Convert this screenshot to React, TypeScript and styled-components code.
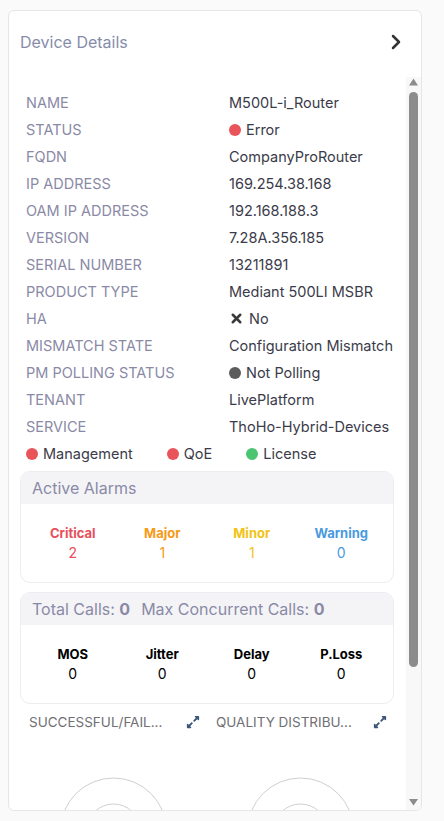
import React from 'react';
import styled, { createGlobalStyle } from 'styled-components';
import { ChevronRight, X } from 'lucide-react';
import { FaExpandAlt } from 'react-icons/fa';

const GlobalStyle = createGlobalStyle`
  html, body {
    margin: 0;
    padding: 0;
    background: #fafafa;
    font-family: Inter, "Noto Sans", sans-serif;
  }
`;

interface DetailRow {
  label: string;
  value: string;
  dot?: string;
  cross?: boolean;
}

const rows: DetailRow[] = [
  { label: 'NAME', value: 'M500L-i_Router' },
  { label: 'STATUS', value: 'Error', dot: '#e9545a' },
  { label: 'FQDN', value: 'CompanyProRouter' },
  { label: 'IP ADDRESS', value: '169.254.38.168' },
  { label: 'OAM IP ADDRESS', value: '192.168.188.3' },
  { label: 'VERSION', value: '7.28A.356.185' },
  { label: 'SERIAL NUMBER', value: '13211891' },
  { label: 'PRODUCT TYPE', value: 'Mediant 500LI MSBR' },
  { label: 'HA', value: 'No', cross: true },
  { label: 'MISMATCH STATE', value: 'Configuration Mismatch' },
  { label: 'PM POLLING STATUS', value: 'Not Polling', dot: '#5c5c5c' },
  { label: 'TENANT', value: 'LivePlatform' },
  { label: 'SERVICE', value: 'ThoHo-Hybrid-Devices' },
];

const legend = [
  { name: 'Management', color: '#e9545a' },
  { name: 'QoE', color: '#e9545a' },
  { name: 'License', color: '#4cc572' },
];

const alarms = [
  { name: 'Critical', value: 2, color: '#e8505b' },
  { name: 'Major', value: 1, color: '#f69a17' },
  { name: 'Minor', value: 1, color: '#f2c315' },
  { name: 'Warning', value: 0, color: '#4a9ae0' },
];

const quality = ['MOS', 'Jitter', 'Delay', 'P.Loss'];

// titles are shown already shortened, as the widget does
const charts = ['SUCCESSFUL/FAIL...', 'QUALITY DISTRIBU...'];

// visible part of the scrolled content, as a share of the whole
const visibleShare = 0.818;

const Page = styled.div`
  padding: 10px 0 10px 8px;
`;

const Card = styled.div`
  width: 414px;
  height: 801px;
  box-sizing: border-box;
  background: #fff;
  border: 1px solid #e6e6e9;
  border-radius: 6px;
  display: flex;
  flex-direction: column;
  overflow: hidden;
`;

const Header = styled.div`
  height: 66px;
  flex-shrink: 0;
  box-sizing: border-box;
  padding: 0 13px 4px 11px;
  display: flex;
  align-items: center;
  justify-content: space-between;
  color: #333;
`;

const Title = styled.div`
  font-size: 16px;
  color: #878cab;
`;

const Body = styled.div`
  flex: 1;
  min-height: 0;
  display: flex;
`;

const Content = styled.div`
  flex: 1;
  overflow: hidden;
  padding: 12px 12px 0 11px;
`;

const ScrollBar = styled.div`
  width: 15px;
  flex-shrink: 0;
  background: #f8f8f8;
  display: flex;
  flex-direction: column;
  align-items: center;
`;

const ScrollArrow = styled.div<{ $down?: boolean }>`
  height: 15px;
  width: 100%;
  display: flex;
  justify-content: center;
  align-items: ${(p) => (p.$down ? 'flex-end' : 'flex-start')};
  padding: ${(p) => (p.$down ? '0 0 4px' : '1px 0 0')};
  box-sizing: border-box;
  color: #8c8c8c;
`;

const ThumbTrack = styled.div`
  flex: 1;
  width: 100%;
  padding: 0 3px;
  box-sizing: border-box;
`;

const Thumb = styled.div`
  width: 100%;
  background: #8c8c8c;
  border-radius: 5px;
`;

const Rows = styled.div`
  padding-left: 6px;
`;

const Row = styled.div`
  display: grid;
  grid-template-columns: 203px 1fr;
  height: 27px;
  align-items: center;
  font-size: 14.5px;
`;

const Label = styled.div`
  color: #8a8aa6;
`;

const Value = styled.div`
  color: #3b3b4a;
  display: flex;
  align-items: center;
  gap: 5px;
  white-space: nowrap;
`;

const Dot = styled.span<{ $color: string }>`
  width: 12px;
  height: 12px;
  border-radius: 50%;
  background: ${(p) => p.$color};
  flex-shrink: 0;
`;

const Legend = styled.div`
  display: flex;
  gap: 34px;
  height: 27px;
  align-items: center;
  font-size: 14.5px;
  color: #3b3b4a;
`;

const LegendItem = styled.div`
  display: flex;
  align-items: center;
  gap: 5px;
`;

const Box = styled.div<{ $top: number }>`
  margin-top: ${(p) => p.$top}px;
  border: 1px solid #ededf1;
  border-radius: 10px;
  overflow: hidden;
`;

const BoxHeader = styled.div`
  height: 32px;
  background: #f4f4f7;
  padding-left: 11px;
  display: flex;
  align-items: center;
  font-size: 16px;
  color: #8a8aa6;
  gap: 11px;
`;

const Strong = styled.b`
  font-weight: 700;
`;

const BoxBody = styled.div`
  display: grid;
  grid-template-columns: repeat(4, 1fr);
  padding: 20px 7px 18px;
`;

const Stat = styled.div<{ $color: string }>`
  display: flex;
  flex-direction: column;
  align-items: center;
  color: ${(p) => p.$color};
`;

const StatName = styled.div`
  font-size: 13px;
  font-weight: 700;
  line-height: 18px;
`;

const StatValue = styled.div`
  font-size: 14px;
  line-height: 22px;
`;

const Charts = styled.div`
  display: grid;
  grid-template-columns: 1fr 1fr;
  margin-top: 9px;
`;

const Chart = styled.div`
  display: flex;
  flex-direction: column;
`;

const ChartHead = styled.div`
  display: flex;
  align-items: center;
  justify-content: space-between;
  padding: 0 7px 0 9px;
  height: 18px;
  color: #3d5878;
`;

const ChartTitle = styled.div`
  font-size: 13.5px;
  color: #6f6f74;
  white-space: nowrap;
`;

const Donut = styled.svg`
  display: block;
  width: 100%;
  height: 230px;
`;

export default function App() {
  return (
    <>
      <GlobalStyle />
      <Page>
        <Card>
          <Header>
            <Title>Device Details</Title>
            <ChevronRight size={24} strokeWidth={2.5} />
          </Header>
          <Body>
            <Content>
              <Rows>
                {rows.map((row) => (
                  <Row key={row.label}>
                    <Label>{row.label}</Label>
                    <Value>
                      {row.dot && <Dot $color={row.dot} />}
                      {row.cross && <X size={15} strokeWidth={4} color="#3a3a3a" />}
                      {row.value}
                    </Value>
                  </Row>
                ))}
                <Legend>
                  {legend.map((item) => (
                    <LegendItem key={item.name}>
                      <Dot $color={item.color} />
                      {item.name}
                    </LegendItem>
                  ))}
                </Legend>
              </Rows>
              <Box $top={4}>
                <BoxHeader>Active Alarms</BoxHeader>
                <BoxBody>
                  {alarms.map((a) => (
                    <Stat key={a.name} $color={a.color}>
                      <StatName>{a.name}</StatName>
                      <StatValue>{a.value}</StatValue>
                    </Stat>
                  ))}
                </BoxBody>
              </Box>
              <Box $top={9}>
                <BoxHeader>
                  <span>
                    Total Calls: <Strong>0</Strong>
                  </span>
                  <span>
                    Max Concurrent Calls: <Strong>0</Strong>
                  </span>
                </BoxHeader>
                <BoxBody>
                  {quality.map((q) => (
                    <Stat key={q} $color="#000">
                      <StatName>{q}</StatName>
                      <StatValue>0</StatValue>
                    </Stat>
                  ))}
                </BoxBody>
              </Box>
              <Charts>
                {charts.map((c) => (
                  <Chart key={c}>
                    <ChartHead>
                      <ChartTitle>{c}</ChartTitle>
                      <FaExpandAlt size={14} />
                    </ChartHead>
                    <Donut viewBox="0 0 187 230">
                      <circle cx="93.5" cy="100" r="53" fill="none" stroke="#cfcfcf" />
                      <circle cx="93.5" cy="100" r="27" fill="none" stroke="#cfcfcf" />
                    </Donut>
                  </Chart>
                ))}
              </Charts>
            </Content>
            <ScrollBar>
              <ScrollArrow>
                <svg width="9" height="8" viewBox="0 0 9 8">
                  <polygon points="4.5,0.5 9,7.5 0,7.5" fill="currentColor" />
                </svg>
              </ScrollArrow>
              <ThumbTrack>
                <Thumb style={{ height: `${visibleShare * 100}%` }} />
              </ThumbTrack>
              <ScrollArrow $down>
                <svg width="9" height="7" viewBox="0 0 9 7">
                  <polygon points="0,0 9,0 4.5,6.5" fill="currentColor" />
                </svg>
              </ScrollArrow>
            </ScrollBar>
          </Body>
        </Card>
      </Page>
    </>
  );
}
